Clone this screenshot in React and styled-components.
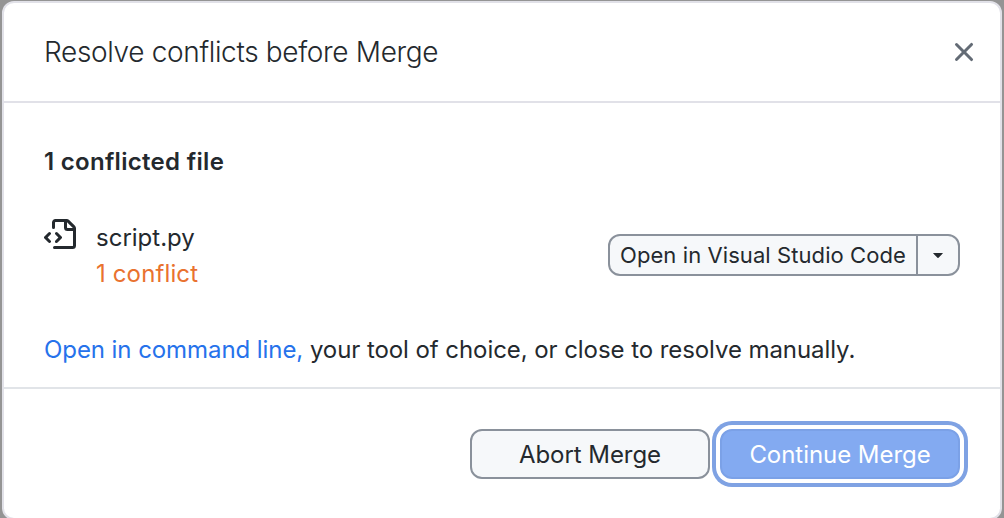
import React from "react";
import styled, { createGlobalStyle } from "styled-components";

const GlobalStyle = createGlobalStyle`
  * { box-sizing: border-box; }
  html, body { margin: 0; height: 518px; overflow: hidden; background: #949494; }
  body { font-family: Inter, "Liberation Sans", sans-serif; color: #24292e; -webkit-font-smoothing: antialiased; }
`;

const Backdrop = styled.main`
  height: 518px;
  padding: 1px 2px 0;
  overflow: hidden;
  background: #949494;
`;

const Dialog = styled.section`
  display: flex;
  flex-direction: column;
  height: 519px;
  background: #fff;
  border: 2px solid #e1e1e8;
  border-radius: 12px;
`;

const Header = styled.header`
  display: flex;
  flex: none;
  align-items: center;
  justify-content: space-between;
  height: 100px;
  padding: 0 20px 0 40px;
  border-bottom: 2px solid #e1e1e8;
`;

const Title = styled.h1`
  margin: 0;
  font-size: 28px;
  font-weight: 300;
  line-height: 40px;
  letter-spacing: -0.34px;
  white-space: nowrap;
`;

const CloseButton = styled.button`
  display: flex;
  padding: 0;
  border: 0;
  background: none;
  color: #636b75;
`;

const Content = styled.div`
  flex: none;
  height: 286px;
  padding: 41px 40px 0;
  border-bottom: 2px solid #e1e4e8;
`;

const Summary = styled.h2`
  margin: 0;
  font-size: 24px;
  font-weight: 600;
  line-height: 36px;
  letter-spacing: 0.3px;
`;

const FileRow = styled.div`
  display: flex;
  height: 72px;
  margin-top: 39px;
`;

const FileIcon = styled.svg`
  flex: none;
  width: 32px;
  height: 32px;
  fill: currentColor;
`;

const FileInfo = styled.div`
  flex: 1;
  margin-left: 20px;
  padding-top: 1px;
  font-size: 24px;
  line-height: 36px;
`;

const FileName = styled.div`
  letter-spacing: 0;
`;

const ConflictCount = styled.div`
  color: #e9722f;
  letter-spacing: 0.13px;
`;

const SplitButton = styled.div`
  display: flex;
  width: 352px;
  height: 42px;
  margin-top: 15px;
  border: 2px solid #8a919b;
  border-radius: 12px;
  background: #f6f8fa;
  overflow: hidden;
`;

const SplitPart = styled.button`
  display: flex;
  flex: ${(p) => (p.$menu ? "none" : "1")};
  align-items: center;
  justify-content: center;
  width: ${(p) => (p.$menu ? "42px" : "auto")};
  min-width: 0;
  padding: 0;
  border: 0;
  border-left: ${(p) => (p.$menu ? "2px solid #8a919b" : "0")};
  background: none;
  color: #24292e;
  font: 400 22px Inter, sans-serif;
  letter-spacing: 0.08px;
  white-space: nowrap;
`;

const Hint = styled.p`
  margin: 41px 0 0;
  font-size: 24px;
  line-height: 36px;
  letter-spacing: -0.07px;
  white-space: nowrap;
`;

const HintLink = styled.a`
  color: #2672eb;
`;

const Footer = styled.footer`
  display: flex;
  justify-content: flex-end;
  gap: 10px;
  padding: 40px 40px 0;
`;

const ActionButton = styled.button`
  width: 240px;
  height: 50px;
  padding: 0;
  border: 2px solid ${(p) => (p.$primary ? "#7ba1e7" : "#8a919b")};
  border-radius: 12px;
  background: ${(p) => (p.$primary ? "#83aaf1" : "#f6f8fa")};
  color: ${(p) => (p.$primary ? "#fff" : "#24292e")};
  box-shadow: ${(p) => (p.$primary ? "0 0 0 4px #fff, 0 0 0 8px #7fa2e3" : "none")};
  font: 400 24px Inter, sans-serif;
  letter-spacing: -0.05px;
`;

export default function App() {
  return (
    <>
      <GlobalStyle />
      <Backdrop>
        <Dialog role="dialog">
          <Header>
            <Title>Resolve conflicts before Merge</Title>
            <CloseButton aria-label="Close">
              <svg width="32" height="32" viewBox="0 0 16 16" fill="currentColor">
                <path d="M3.72 3.72a.75.75 0 0 1 1.06 0L8 6.94l3.22-3.22a.75.75 0 1 1 1.06 1.06L9.06 8l3.22 3.22a.75.75 0 1 1-1.06 1.06L8 9.06l-3.22 3.22a.75.75 0 0 1-1.06-1.06L6.94 8 3.72 4.78a.75.75 0 0 1 0-1.06Z" />
              </svg>
            </CloseButton>
          </Header>
          <Content>
            <Summary>1 conflicted file</Summary>
            <FileRow>
              <FileIcon viewBox="0 0 16 16">
                <path d="M4 1.75C4 .784 4.784 0 5.75 0h5.586c.464 0 .909.184 1.237.513l2.914 2.914c.329.328.513.773.513 1.237v8.586A1.75 1.75 0 0 1 14.25 15h-9a.75.75 0 0 1 0-1.5h9a.25.25 0 0 0 .25-.25V6h-2.75A1.75 1.75 0 0 1 10 4.25V1.5H5.75a.25.25 0 0 0-.25.25v2.5a.75.75 0 0 1-1.5 0Zm1.72 4.97a.75.75 0 0 1 1.06 0l2 2a.75.75 0 0 1 0 1.06l-2 2a.749.749 0 0 1-1.275-.326.749.749 0 0 1 .215-.734l1.47-1.47-1.47-1.47a.75.75 0 0 1 0-1.06ZM3.28 7.78 1.81 9.25l1.47 1.47a.751.751 0 0 1-.018 1.042.751.751 0 0 1-1.042.018l-2-2a.75.75 0 0 1 0-1.06l2-2a.751.751 0 0 1 1.042.018.751.751 0 0 1 .018 1.042Zm8.22-6.218V4.25c0 .138.112.25.25.25h2.688l-.011-.013-2.914-2.914-.013-.011Z" />
              </FileIcon>
              <FileInfo>
                <FileName>script.py</FileName>
                <ConflictCount>1 conflict</ConflictCount>
              </FileInfo>
              <SplitButton>
                <SplitPart>Open in Visual Studio Code</SplitPart>
                <SplitPart $menu aria-label="More options">
                  <svg width="10" height="5" viewBox="0 0 10 5" fill="currentColor">
                    <path d="M.5 0h9q.6.2.2.6L5.5 4.8q-.5.4-1 0L.3.6Q-.1.2.5 0Z" />
                  </svg>
                </SplitPart>
              </SplitButton>
            </FileRow>
            <Hint>
              <HintLink>Open in command line,</HintLink> your tool of choice, or close to resolve manually.
            </Hint>
          </Content>
          <Footer>
            <ActionButton>Abort Merge</ActionButton>
            <ActionButton $primary>Continue Merge</ActionButton>
          </Footer>
        </Dialog>
      </Backdrop>
    </>
  );
}
